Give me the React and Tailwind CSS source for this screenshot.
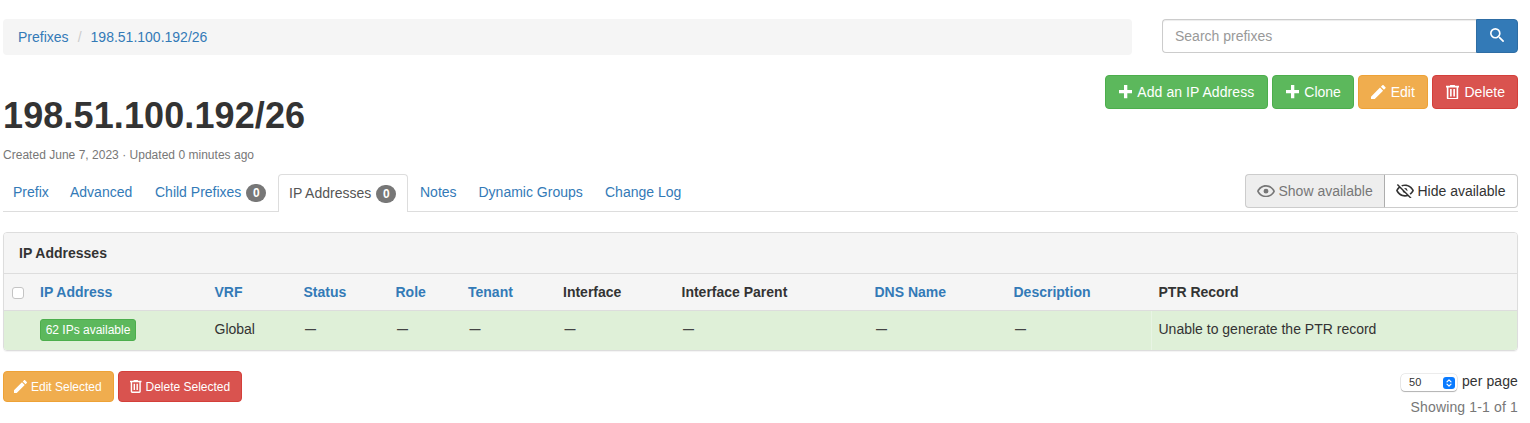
import React from "react";

const ICONS = {
  plus: {
    box: "4 4 16 16",
    d: "M20 14H14V20H10V14H4V10H10V4H14V10H20V14Z",
  },
  pencil: {
    box: "3 3 18 18",
    d: "M20.71,7.04C21.1,6.65 21.1,6 20.71,5.63L18.37,3.29C18,2.9 17.35,2.9 16.96,3.29L15.12,5.12L18.87,8.87M3,17.25V21H6.75L17.81,9.93L14.06,6.18L3,17.25Z",
  },
  trash: {
    box: "4 3 16 18",
    d: "M9,3V4H4V6H5V19A2,2 0 0,0 7,21H17A2,2 0 0,0 19,19V6H20V4H15V3H9M7,6H17V19H7V6M9,8V17H11V8H9M13,8V17H15V8H13Z",
  },
  search: {
    box: "3 3 17.5 17.5",
    d: "M9.5,3A6.5,6.5 0 0,1 16,9.5C16,11.11 15.41,12.59 14.44,13.73L14.71,14H15.5L20.5,19L19,20.5L14,15.5V14.71L13.73,14.44C12.59,15.41 11.11,16 9.5,16A6.5,6.5 0 0,1 3,9.5A6.5,6.5 0 0,1 9.5,3M9.5,5C7,5 5,7 5,9.5C5,12 7,14 9.5,14C12,14 14,12 14,9.5C14,7 12,5 9.5,5Z",
  },
  eye: {
    box: "1 4.5 22 15",
    d: "M12,9A3,3 0 0,1 15,12A3,3 0 0,1 12,15A3,3 0 0,1 9,12A3,3 0 0,1 12,9M12,4.5C17,4.5 21.27,7.61 23,12C21.27,16.39 17,19.5 12,19.5C7,19.5 2.73,16.39 1,12C2.73,7.61 7,4.5 12,4.5M3.18,12C4.83,15.36 8.24,17.5 12,17.5C15.76,17.5 19.17,15.36 20.82,12C19.17,8.64 15.76,6.5 12,6.5C8.24,6.5 4.83,8.64 3.18,12Z",
  },
  eyeOff: {
    box: "1 4 22 18",
    d: "M2,5.27L3.28,4L20,20.72L18.73,22L15.65,18.92C14.5,19.3 13.28,19.5 12,19.5C7,19.5 2.73,16.39 1,12C1.69,10.24 2.79,8.69 4.19,7.46L2,5.27M12,9A3,3 0 0,1 15,12C15,12.35 14.94,12.69 14.83,13L11,9.17C11.31,9.06 11.65,9 12,9M12,4.5C17,4.5 21.27,7.61 23,12C22.18,14.08 20.79,15.88 19,17.19L17.58,15.76C18.94,14.82 20.06,13.54 20.82,12C19.17,8.64 15.76,6.5 12,6.5C10.91,6.5 9.84,6.68 8.84,7L7.3,5.47C8.74,4.85 10.33,4.5 12,4.5M3.18,12C4.83,15.36 8.24,17.5 12,17.5C12.69,17.5 13.37,17.43 14,17.29L11.72,15C10.29,14.85 9.15,13.71 9,12.28L5.6,8.87C4.61,9.72 3.78,10.78 3.18,12Z",
  },
};

function Icon({ name, className }) {
  return (
    <svg viewBox={ICONS[name].box} fill="currentColor" className={`shrink-0 ${className}`}>
      <path d={ICONS[name].d} />
    </svg>
  );
}

function Button({ className, children }) {
  return (
    <button className={`flex items-center rounded border whitespace-nowrap ${className}`}>
      {children}
    </button>
  );
}

function Tab({ label, count, active, className }) {
  return (
    <li
      className={`flex h-[38px] shrink-0 whitespace-nowrap ${
        active
          ? "-mb-px rounded-t border border-b-0 border-[#ddd] bg-white pt-2 pl-2.5 text-[#555]"
          : "pt-2 text-[#337ab7]"
      } ${className}`}
    >
      <span className="leading-5">{label}</span>
      {count !== undefined && (
        <span className="mt-[2px] ml-[5px] flex h-[18px] w-5 items-center justify-center rounded-full bg-[#777] text-xs leading-none font-bold text-white">
          {count}
        </span>
      )}
    </li>
  );
}

const COLUMNS = [
  { label: "IP Address", link: true, width: "w-[174.5px]" },
  { label: "VRF", link: true, width: "w-[89px]", value: "Global" },
  { label: "Status", link: true, width: "w-[92px]", value: "—" },
  { label: "Role", link: true, width: "w-[72.5px]", value: "—" },
  { label: "Tenant", link: true, width: "w-[95px]", value: "—" },
  { label: "Interface", width: "w-[118.5px]", value: "—" },
  { label: "Interface Parent", width: "w-[193px]", value: "—" },
  { label: "DNS Name", link: true, width: "w-[139px]", value: "—" },
  { label: "Description", link: true, width: "w-[137px]", value: "—" },
  { label: "PTR Record", last: true, value: "Unable to generate the PTR record" },
];

export default function App() {
  return (
    <div className="h-[423px] overflow-hidden bg-white pt-[19px] pr-3 pl-[3px] font-['Liberation_Sans',Arial,sans-serif] text-sm leading-5 text-[#333]">
      <div className="flex items-start justify-between">
        <nav className="flex h-9 w-[1129px] items-center rounded bg-[#f5f5f5] pl-[15px] text-[#337ab7]">
          <span>Prefixes</span>
          <span className="w-[22px] text-center text-[#ccc]">/</span>
          <span>198.51.100.192/26</span>
        </nav>
        <div className="flex h-[34px] w-[356px]">
          <input
            placeholder="Search prefixes"
            className="min-w-0 flex-1 rounded-l border border-r-0 border-[#ccc] px-3 shadow-[inset_0_1px_1px_rgba(0,0,0,0.075)] placeholder:text-[#999]"
          />
          <button className="flex w-[42px] justify-center rounded-r border border-[#2e6da4] bg-[#337ab7] pt-2 text-white">
            <Icon name="search" className="size-[14.3px]" />
          </button>
        </div>
      </div>

      <div className="mt-5 flex h-[73px] items-start justify-between">
        <h1 className="pt-[21px] text-4xl leading-10 font-bold tracking-[0.11px]">198.51.100.192/26</h1>
        <div className="flex gap-1 text-white">
          <Button className="h-[34px] w-[163px] border-[#4cae4c] bg-[#5cb85c] pl-[13px]">
            <Icon name="plus" className="mr-[5px] size-[13.3px]" />
            <span className="tracking-[0.08px]">Add an IP Address</span>
          </Button>
          <Button className="h-[34px] w-[82px] border-[#4cae4c] bg-[#5cb85c] pl-[13px]">
            <Icon name="plus" className="mr-[5px] size-[13.3px]" />
            Clone
          </Button>
          <Button className="h-[34px] w-[70px] border-[#eea236] bg-[#f0ad4e] pl-3">
            <Icon name="pencil" className="mr-[5px] size-[14.7px]" />
            Edit
          </Button>
          <Button className="h-[34px] w-[86px] border-[#d43f3a] bg-[#d9534f] pl-[13px]">
            <Icon name="trash" className="mr-[5.5px] h-[14.7px] w-[13px]" />
            Delete
          </Button>
        </div>
      </div>

      <p className="h-[26px] text-xs leading-[14px] tracking-[0.02px] text-[#777]">
        Created June 7, 2023 · Updated 0 minutes ago
      </p>

      <div className="flex h-[38px] items-start justify-between border-b border-[#ddd]">
        <ul className="flex">
          <Tab label="Prefix" className="w-[67px] pl-2.5" />
          <Tab label="Advanced" className="w-[85px]" />
          <Tab label="Child Prefixes" count={0} className="w-[123px]" />
          <Tab label="IP Addresses" count={0} active className="w-[130px]" />
          <Tab label="Notes" className="w-[70.5px] pl-3" />
          <Tab label="Dynamic Groups" className="w-[126.5px]" />
          <Tab label="Change Log" className="w-[90px]" />
        </ul>
        <div className="flex h-[34px]">
          <button className="flex w-[140px] items-center rounded-l border border-[#ccc] border-r-[#adadad] bg-[#eee] pl-[11px] whitespace-nowrap text-[#777]">
            <Icon name="eye" className="mr-[3.5px] h-[12.3px] w-[18px]" />
            Show available
          </button>
          <button className="flex w-[133px] items-center rounded-r border border-l-0 border-[#ccc] bg-white pl-[11px] whitespace-nowrap">
            <Icon name="eyeOff" className="mr-[3.5px] h-[14.7px] w-[18px]" />
            Hide available
          </button>
        </div>
      </div>

      <section className="mt-5 h-[119px] overflow-hidden rounded border border-[#ddd] shadow-[0_1px_1px_rgba(0,0,0,0.05)]">
        <h2 className="h-10 bg-[#f5f5f5] pt-2.5 pl-[15px] leading-5 font-bold">IP Addresses</h2>
        <div className="flex h-[37px] items-center border-t border-[#ddd] bg-[#f5f5f5] pl-2 font-bold">
          <div className="w-7">
            <div className="mt-0.5 size-3 rounded-[3px] border border-[#c4c4c4] bg-white" />
          </div>
          {COLUMNS.map((c) => (
            <div
              key={c.label}
              className={`whitespace-nowrap ${c.last ? "flex-1 pl-2" : `shrink-0 ${c.width}`} ${
                c.link ? "text-[#337ab7]" : ""
              }`}
            >
              {c.label}
            </div>
          ))}
        </div>
        <div className="flex h-10 items-stretch border-t border-[#ddd] bg-[#dff0d8] pl-9">
          {COLUMNS.map((c) => (
            <div
              key={c.label}
              className={`pt-2 whitespace-nowrap ${
                c.last ? "flex-1 border-l border-[#e8f4e4] pl-[7px]" : `shrink-0 ${c.width}`
              }`}
            >
              {c.value === undefined ? (
                <button className="flex h-[22px] w-24 items-center justify-center rounded-[3px] border border-[#4cae4c] bg-[#5cb85c] text-xs leading-[18px] text-white">
                  62 IPs available
                </button>
              ) : c.value === "—" ? (
                <span className="block pl-[1.5px] text-[11px] leading-5 font-bold text-[#444]">{c.value}</span>
              ) : (
                c.value
              )}
            </div>
          ))}
        </div>
      </section>

      <div className="mt-5 flex items-start justify-between">
        <div className="flex gap-1 text-xs text-white">
          <Button className="h-[31px] w-[111px] border-[#eea236] bg-[#f0ad4e] pl-2.5">
            <Icon name="pencil" className="mr-1 size-[13px]" />
            Edit Selected
          </Button>
          <Button className="h-[31px] w-[124px] border-[#d43f3a] bg-[#d9534f] pl-[11px]">
            <Icon name="trash" className="mr-1 h-[13px] w-[11.5px]" />
            Delete Selected
          </Button>
        </div>
        <div className="flex flex-col items-end">
          <div className="flex h-5 items-start gap-[5px]">
            <div className="mt-[3px] flex h-[17px] w-14 items-center justify-between rounded-[4px] bg-white pr-0.5 pl-2 text-[11px] leading-none shadow-[0_0_0_0.5px_rgba(0,0,0,0.15),0_1px_1px_rgba(0,0,0,0.25)]">
              <span className="tracking-[0.3px]">50</span>
              <span className="flex size-3 items-center justify-center rounded-[3px] bg-[#0a7bff]">
                <svg viewBox="0 0 6 8" className="h-2 w-1.5" fill="none" stroke="white" strokeWidth="1.2" strokeLinecap="round" strokeLinejoin="round">
                  <path d="M1 2.8L3 0.8L5 2.8M1 5.2L3 7.2L5 5.2" />
                </svg>
              </span>
            </div>
            <span className="tracking-[0.1px]">per page</span>
          </div>
          <div className="mt-1.5 tracking-[0.15px] text-[#777]">Showing 1-1 of 1</div>
        </div>
      </div>
    </div>
  );
}
